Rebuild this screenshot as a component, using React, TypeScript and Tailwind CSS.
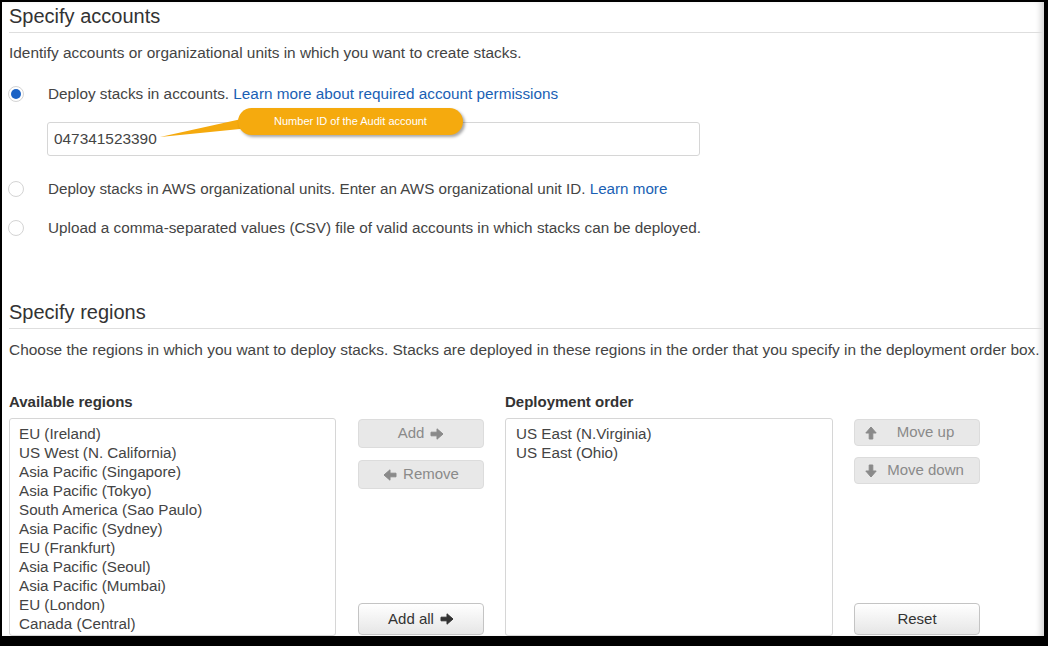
import React from 'react';

const available = [
    'EU (Ireland)',
    'US West (N. California)',
    'Asia Pacific (Singapore)',
    'Asia Pacific (Tokyo)',
    'South America (Sao Paulo)',
    'Asia Pacific (Sydney)',
    'EU (Frankfurt)',
    'Asia Pacific (Seoul)',
    'Asia Pacific (Mumbai)',
    'EU (London)',
    'Canada (Central)',
];

const deployment = ['US East (N.Virginia)', 'US East (Ohio)'];

// bold arrow, points right by default
const Arrow: React.FC<{ rotate?: number }> = ({ rotate = 0 }) => (
    <svg width="14" height="14" viewBox="0 0 14 14" style={{ transform: `rotate(${rotate}deg)` }}>
        <path d="M1 5.2h6V1.8L13 7l-6 5.2V8.8H1z" fill="currentColor" stroke="currentColor" strokeWidth="1" strokeLinejoin="round" />
    </svg>
);

const Radio: React.FC<{ checked?: boolean }> = ({ checked }) => (
    <span className="w-[16px] h-[16px] rounded-full border border-[#d4d4d4] bg-white flex items-center justify-center shrink-0">
        {checked && <span className="w-[10px] h-[10px] rounded-full bg-[#1b63c6]" />}
    </span>
);

const disabledBtn =
    'w-[126px] rounded-[4px] bg-[#e8e8e8] border border-[#dcdcdc] text-[#8a8a8a] text-[15px] flex items-center justify-center';
const normalBtn =
    'w-[126px] h-[32px] rounded-[4px] bg-gradient-to-b from-white to-[#e6e6e6] border border-[#c4c4c4] text-[#333] text-[15px] flex items-center justify-center';

const App: React.FC = () => {
    return (
        <div className="w-[1048px] h-[646px] bg-black pt-[2px] pl-[2px]" style={{ fontFamily: '"Liberation Sans", Arial, sans-serif' }}>
            <div className="w-[1042px] h-[634px] bg-white overflow-hidden pl-[7px] text-[#444] shadow-[inset_-6px_0_6px_-3px_rgba(0,0,0,0.18)]">
                {/* accounts */}
                <div className="h-[31px] border-b border-[#dedede] pt-[2px]">
                    <h2 className="text-[20px] leading-[24px] text-[#333]">Specify accounts</h2>
                </div>
                <p className="mt-[10px] text-[15.4px] leading-[20px]">Identify accounts or organizational units in which you want to create stacks.</p>

                <div className="mt-[21px] flex items-center h-[20px] -ml-[1px]">
                    <Radio checked />
                    <span className="ml-[24px] text-[15.3px]">
                        Deploy stacks in accounts. <span className="text-[#1a5fb4]">Learn more about required account permissions</span>
                    </span>
                </div>

                <div className="relative mt-[18px] ml-[38px] w-[653px] h-[34px] border border-[#d6d6d6] rounded-[3px] flex items-center pl-[6px] text-[15.4px] text-[#444]">
                    047341523390
                    <div className="absolute left-[190px] -top-[15px] w-[225px] h-[27px]">
                        <svg className="absolute -left-[78px] top-[4px]" width="90" height="28" viewBox="0 0 90 28">
                            <polygon points="0,25 86,6 90,16" fill="#f5aa0e" />
                        </svg>
                        <div className="absolute inset-0 rounded-full bg-[#f5aa0e] shadow-[2px_2px_3px_rgba(0,0,0,0.35)] flex items-center justify-center text-white text-[11px]">
                            Number ID of the Audit account
                        </div>
                    </div>
                </div>

                <div className="mt-[23px] flex items-center h-[20px] -ml-[1px]">
                    <Radio />
                    <span className="ml-[24px] text-[15.2px]">
                        Deploy stacks in AWS organizational units. Enter an AWS organizational unit ID. <span className="text-[#1a5fb4]">Learn more</span>
                    </span>
                </div>
                <div className="mt-[19px] flex items-center h-[20px] -ml-[1px]">
                    <Radio />
                    <span className="ml-[24px] text-[15.3px]">
                        Upload a comma-separated values (CSV) file of valid accounts in which stacks can be deployed.
                    </span>
                </div>

                {/* regions */}
                <div className="mt-[62px] h-[29px] border-b border-[#dedede]">
                    <h2 className="text-[20px] leading-[24px] text-[#333]">Specify regions</h2>
                </div>
                <p className="mt-[11px] text-[15.45px] leading-[20px] whitespace-nowrap">
                    Choose the regions in which you want to deploy stacks. Stacks are deployed in these regions in the order that you specify in the deployment order box.
                </p>

                <div className="mt-[32px] flex">
                    <div className="w-[327px]">
                        <div className="text-[15px] leading-[20px] font-bold text-[#333]">Available regions</div>
                        <div className="mt-[6px] h-[218px] border border-[#d6d6d6] rounded-[3px] pt-[5px] pl-[9px] text-[15.2px] leading-[19px] text-[#444]">
                            {available.map((r) => (
                                <div key={r}>{r}</div>
                            ))}
                        </div>
                    </div>

                    <div className="ml-[22px] pt-[27px] flex flex-col h-[244px]">
                        <div className={`${disabledBtn} h-[29px] gap-[6px]`}>
                            Add <Arrow />
                        </div>
                        <div className={`${disabledBtn} h-[29px] mt-[12px] gap-[6px]`}>
                            <Arrow rotate={180} /> Remove
                        </div>
                        <div className={`${normalBtn} mt-auto mb-[1px] gap-[6px]`}>
                            Add all <Arrow />
                        </div>
                    </div>

                    <div className="ml-[21px] w-[328px]">
                        <div className="text-[15px] leading-[20px] font-bold text-[#333]">Deployment order</div>
                        <div className="mt-[6px] h-[218px] border border-[#d6d6d6] rounded-[3px] pt-[5px] pl-[10px] text-[15.2px] leading-[19px] text-[#444]">
                            {deployment.map((r) => (
                                <div key={r}>{r}</div>
                            ))}
                        </div>
                    </div>

                    <div className="ml-[21px] pt-[27px] flex flex-col h-[244px]">
                        <div className={`${disabledBtn} h-[27px] justify-start pl-[9px]`}>
                            <Arrow rotate={-90} />
                            <span className="flex-1 text-center pr-[6px]">Move up</span>
                        </div>
                        <div className={`${disabledBtn} h-[27px] mt-[11px] justify-start pl-[9px]`}>
                            <Arrow rotate={90} />
                            <span className="flex-1 text-center pr-[6px]">Move down</span>
                        </div>
                        <div className={`${normalBtn} mt-auto mb-[1px]`}>Reset</div>
                    </div>
                </div>
            </div>
        </div>
    );
};

export default App;
